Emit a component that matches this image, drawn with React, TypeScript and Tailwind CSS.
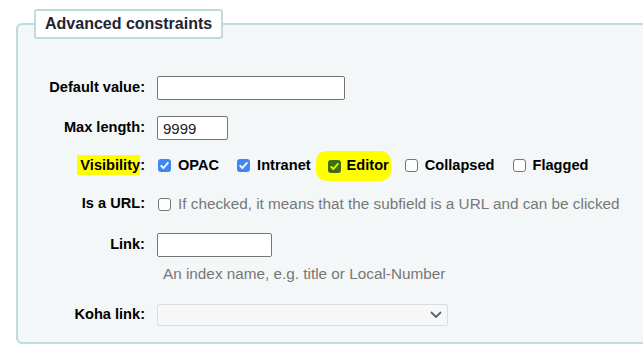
import React from "react"

type BoxKind = "blue" | "green" | "empty"

function Box({ kind }: { kind: BoxKind }) {
  if (kind === "empty") {
    return <span className="inline-block h-[13px] w-[13px] shrink-0 rounded-[3px] border border-[#767676] bg-white" />
  }
  const bg = kind === "blue" ? "bg-[#3f86f4]" : "bg-[#3d6f10]"
  const stroke = kind === "blue" ? "#ffffff" : "#f2f200"
  return (
    <span className={`inline-flex h-[13px] w-[13px] shrink-0 items-center justify-center rounded-[3px] ${bg}`}>
      <svg width="13" height="13" viewBox="0 0 13 13" fill="none">
        <path d="M3.2 6.8 L5.4 9 L9.9 3.9" stroke={stroke} strokeWidth="1.8" strokeLinecap="round" strokeLinejoin="round" />
      </svg>
    </span>
  )
}

function Row({ label, className, children }: { label: React.ReactNode; className?: string; children?: React.ReactNode }) {
  return (
    <div className={`flex items-center gap-[12px] ${className ?? ""}`}>
      <div className="w-[127px] shrink-0 text-right text-[14.6px] font-bold text-black">{label}</div>
      <div className="flex items-center">{children}</div>
    </div>
  )
}

export default function App() {
  return (
    <div className="h-[347px] w-[643px] overflow-hidden bg-white font-['Liberation_Sans',Arial,sans-serif]">
      <fieldset className="ml-[16px] mt-[9px] w-[660px] rounded-[6px] border-2 border-[#bddcdd] bg-[#f3f7f8]">
        <legend className="ml-[16px] h-[30px] rounded-[3px] border-2 border-[#bddcdd] bg-white px-[9px] text-[16px] font-bold leading-[26px] text-[#222433]">
          Advanced constraints
        </legend>
        <div className="flex flex-col pb-[16px] pt-[37px]">
          <Row label="Default value:" className="h-[24px]">
            <input className="h-[24px] w-[188px] rounded-[2px] border border-[#767676] bg-white" />
          </Row>
          <Row label="Max length:" className="mt-[16px] h-[24px]">
            <input
              defaultValue="9999"
              className="h-[24px] w-[71px] rounded-[2px] border border-[#767676] bg-white px-[5px] text-[15px] text-[#222]"
            />
          </Row>
          <Row
            label={
              <>
                <span className="bg-[#ffff00] py-[2px] pl-[3px]">Visibility</span>:
              </>
            }
            className="mt-[14px] h-[24px]"
          >
            <div className="flex items-center text-[14.6px] font-bold text-black">
              <label className="ml-[1px] flex items-center gap-[7px]">
                <Box kind="blue" />
                OPAC
              </label>
              <label className="ml-[18px] flex items-center gap-[7px]">
                <Box kind="blue" />
                Intranet
              </label>
              <label className="ml-[5px] flex h-[30px] items-center gap-[6px] rounded-[10px] bg-[#ffff00] pl-[12px] pr-[2px]">
                <Box kind="green" />
                Editor
              </label>
              <label className="ml-[14px] flex items-center gap-[7px]">
                <Box kind="empty" />
                Collapsed
              </label>
              <label className="ml-[18px] flex items-center gap-[7px]">
                <Box kind="empty" />
                Flagged
              </label>
            </div>
          </Row>
          <Row label="Is a URL:" className="mt-[14px] h-[24px]">
            <label className="ml-[1px] flex items-center gap-[7px] text-[15.3px] text-[#777]">
              <Box kind="empty" />
              If checked, it means that the subfield is a URL and can be clicked
            </label>
          </Row>
          <Row label="Link:" className="mt-[17px] h-[24px]">
            <input className="h-[24px] w-[115px] rounded-[2px] border border-[#767676] bg-white" />
          </Row>
          <div className="ml-[145px] mt-[7px] flex h-[20px] items-center text-[15.3px] text-[#777]">
            An index name, e.g. title or Local-Number
          </div>
          <Row label="Koha link:" className="mt-[20px] h-[22px]">
            <div className="flex h-[22px] w-[291px] items-center justify-end rounded-[2px] border border-[#dcdcdc] bg-[#f5f7f8] pr-[5px]">
              <svg width="12" height="8" viewBox="0 0 12 8" fill="none">
                <path d="M1.5 1.5 L6 6 L10.5 1.5" stroke="#5f6368" strokeWidth="1.8" strokeLinecap="round" strokeLinejoin="round" />
              </svg>
            </div>
          </Row>
        </div>
      </fieldset>
    </div>
  )
}
